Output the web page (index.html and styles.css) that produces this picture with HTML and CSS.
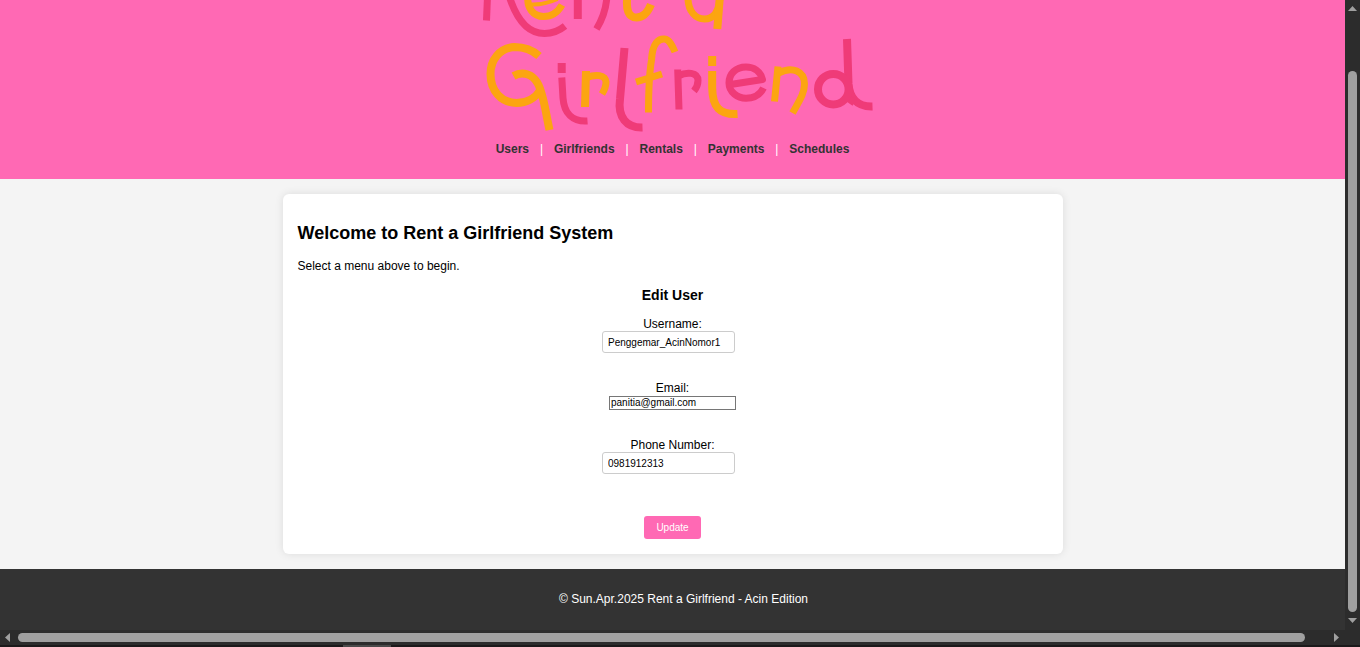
FILE: index.html
```html
<!DOCTYPE html>
<html lang="en">
<head>
<meta charset="utf-8">
<title>Rent a Girlfriend</title>
<link rel="stylesheet" href="styles.css">
</head>
<body>
<div class="window">
  <div class="page">
    <header class="header">
      <svg class="logo" viewBox="462.5 0 420 135" role="img" aria-label="Rent a Girlfriend">
        <g class="red">
          <path class="medium" d="M487 -4L486 20.500"/>
          <path class="medium" d="M508 -6C514 14 524 33.500 544 33.500C553 33.500 559 30.500 564.500 26"/>
          <path d="M577.300 -4V19"/>
          <path class="medium" d="M606.500 -5C606 9 602 19 596 29"/>
          <path d="M561.200 63V73"/>
          <path class="medium" d="M561.300 77.500L562.500 98C563.500 113 572 122 587 121"/>
          <path d="M624 48L619.500 99C617 117 626 128 642 127.500"/>
          <path class="medium" d="M677.200 69.500L678.500 109.500M678 76C686 71.500 697.500 72 697.500 80.500C697.500 85 696 88 693.500 91"/>
          <path class="medium" d="M730 84.500L762 79.500C760 71 753 67 745.500 67C735 67 728.500 74 728.500 83C728.500 92 737 98.200 745.500 98.200C754 98.200 760 94 763 88"/>
          <path d="M846.500 39L848 84C849 96 855 107 872 106.500"/>
          <path class="medium" d="M847 98L854 103"/>
          <circle cx="832.800" cy="89.200" r="15.300"/>
        </g>
        <g class="gold">
          <path class="medium" d="M527.500 -4C526 8 533 16.500 543 16.500C552 16.500 558 11 561.500 5"/>
          <path class="thin" d="M530 4.500C539 5 548 3 557 -1"/>
          <path d="M627 -5C625 10 628 17.500 636 17.500C643 17.500 647 13 650.500 4.500"/>
          <path class="medium" d="M687.500 -2C687.500 11 695 19 704 19C713 19 719 12 719.500 -5"/>
          <path d="M719.500 -5L716.800 29"/>
          <path d="M538.500 56C532 50 523 47 514 47C499 48 490 60 490 74C490 91 501 103 516 103C526 103 535 98 540 90M513 76C522 71 532 74 537 83C543 93 545 112 549 130"/>
          <path d="M585.500 71L584.500 107"/>
          <path class="medium" d="M586 77.500C595 74 605 74.500 605.500 82C605.500 87 604 90 601.500 94"/>
          <path class="medium" d="M648 112.500C648 88 649 72 651 60C652 43 658 38.500 664 39C669 39.500 672 46 674.500 52M635.500 82L661.500 74"/>
          <path d="M711.700 56V66M711.700 71V88C712 107 719 115 737 114"/>
          <path class="medium" d="M777.500 66.500L774 101.500M778 73C792 66 804 71 804 84C804 94 798 102 792 113"/>
        </g>
      </svg>
      <nav class="nav">
        <a>Users</a> | <a>Girlfriends</a> | <a>Rentals</a> | <a>Payments</a> | <a>Schedules</a>
      </nav>
    </header>
    <main class="main">
      <section class="card">
        <h2 class="title">Welcome to Rent a Girlfriend System</h2>
        <p class="intro">Select a menu above to begin.</p>
        <form class="form">
          <h3 class="form-title">Edit User</h3>
          <label class="label" for="username">Username:</label>
          <input class="input" id="username" type="text" value="Penggemar_AcinNomor1">
          <label class="label" for="email">Email:</label>
          <input class="input plain" id="email" type="email" value="panitia@gmail.com">
          <label class="label" for="phone">Phone Number:</label>
          <input class="input phone" id="phone" type="text" value="0981912313">
          <button class="update" type="button">Update</button>
        </form>
      </section>
    </main>
    <footer class="footer">© Sun.Apr.2025 Rent a Girlfriend - Acin Edition</footer>
  </div>
  <div class="scroll-y">
    <svg class="arrow-y" viewBox="0 0 9 5"><path d="M4.500 0L9 5H0z"/></svg>
    <div class="thumb-y"></div>
    <svg class="arrow-y" viewBox="0 0 9 5"><path d="M0 0H9L4.500 5z"/></svg>
  </div>
  <div class="scroll-x">
    <svg class="arrow-x" viewBox="0 0 5 9"><path d="M5 0V9L0 4.500z"/></svg>
    <div class="thumb-x"></div>
    <svg class="arrow-x" viewBox="0 0 5 9"><path d="M0 0L5 4.500L0 9z"/></svg>
  </div>
  <div class="edge"><div class="edge-tab"></div></div>
</div>
</body>
</html>
```

FILE: styles.css
```css
* { box-sizing: border-box; }

body {
  margin: 0;
  font: 12px/14px "Liberation Sans", Arial, sans-serif;
  color: #000;
  background: #2c2c2c;
  overflow: hidden;
}

.window {
  display: grid;
  grid-template-columns: 1345px 15px;
  grid-template-rows: 630px 15px 2px;
  width: 1360px;
  height: 647px;
}

.page {
  display: flex;
  flex-direction: column;
  background: #f4f4f4;
}

.header {
  height: 179px;
  background: #ff69b4;
  color: #fff;
  text-align: center;
}

.logo {
  display: block;
  width: 420px;
  height: 135px;
  margin: 0 auto 7px;
}

.logo g {
  fill: none;
  stroke-width: 8;
  stroke-linejoin: round;
}

.logo .medium { stroke-width: 7; }
.logo .thin { stroke-width: 4; }

.red { stroke: #ef3b78; }
.gold { stroke: #fca510; }

.nav a {
  margin: 0 7.55px;
  color: #333;
  font-weight: bold;
}

.main { padding: 15px 0; }

.card {
  width: 780px;
  height: 360px;
  margin: 0 auto;
  padding: 28px 15px 15px;
  border-radius: 6px;
  background: #fff;
  box-shadow: 0 0 8px rgba(0, 0, 0, 0.1);
}

.title {
  margin: 0 0 15px;
  font-size: 18px;
  line-height: 22px;
}

.intro { margin: 0 0 14px; }

.form {
  display: flex;
  flex-direction: column;
  align-items: center;
}

.form-title {
  margin: 0 0 14px;
  font-size: 14px;
  line-height: 16px;
}

.input {
  width: 133px;
  height: 22px;
  margin: 0 8px 28px 0;
  padding: 0 5px;
  border: 1px solid #ccc;
  border-radius: 3px;
  background: #fff;
  color: #000;
  font: 10px "Liberation Sans", Arial, sans-serif;
}

.input.plain {
  width: 127px;
  height: 14px;
  margin: 1px 0 28px;
  padding: 0 1px 1px;
  border-color: #767676;
  border-radius: 0;
}

.input.phone { margin-bottom: 42px; }

.update {
  width: 57px;
  height: 23px;
  padding: 0;
  border: 0;
  border-radius: 3px;
  background: #ff69b4;
  color: #fff;
  font: 10px "Liberation Sans", Arial, sans-serif;
}

.footer {
  height: 61px;
  padding: 23px 0 0 22px;
  background: #333;
  color: #fff;
  text-align: center;
}

.scroll-y {
  display: flex;
  flex-direction: column;
  align-items: center;
  padding-top: 6px;
}

.thumb-y {
  width: 9px;
  height: 541px;
  margin: 60px 0 6px;
  border-radius: 5px;
  background: #9f9f9f;
}

.arrow-y { width: 9px; height: 5px; fill: #9f9f9f; }
.arrow-x { width: 5px; height: 9px; fill: #9f9f9f; }

.scroll-x {
  grid-column: 1 / 3;
  display: flex;
  align-items: center;
  padding-left: 5px;
}

.thumb-x {
  width: 1287px;
  height: 9px;
  margin: 0 29px 0 8px;
  border-radius: 5px;
  background: #9f9f9f;
}

.edge {
  grid-column: 1 / 3;
  padding-left: 343px;
  background: #1b191a;
}

.edge-tab {
  width: 48px;
  height: 2px;
  background: #4a4a4a;
}
```
